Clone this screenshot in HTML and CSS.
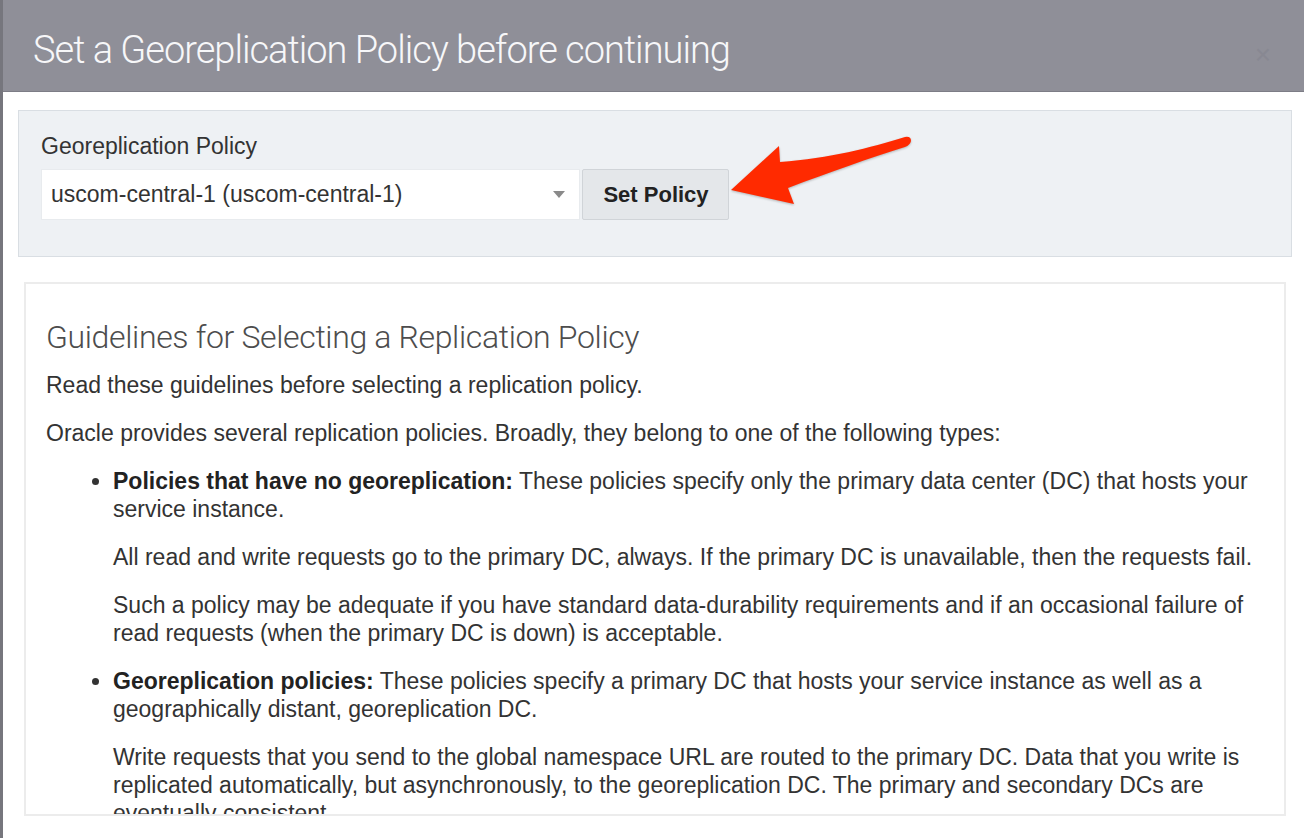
FILE: index.html
```html
<!DOCTYPE html>
<html lang="en">
<head>
<meta charset="utf-8">
<title>Set a Georeplication Policy</title>
<link rel="stylesheet" href="styles.css">
</head>
<body>
<div class="dialog">
  <header class="dialog-header">
    <h1 class="dialog-title">Set a Georeplication Policy before continuing</h1>
    <span class="dialog-close">&times;</span>
  </header>
  <div class="dialog-body">
    <section class="policy-panel">
      <label class="policy-label">Georeplication Policy</label>
      <div class="policy-row">
        <div class="policy-select">
          <span class="policy-value">uscom-central-1 (uscom-central-1)</span>
          <span class="policy-caret"></span>
        </div>
        <button class="policy-button">Set Policy</button>
      </div>
    </section>
    <section class="guide-panel">
      <h2 class="guide-title">Guidelines for Selecting a Replication Policy</h2>
      <p>Read these guidelines before selecting a replication policy.</p>
      <p>Oracle provides several replication policies. Broadly, they belong to one of the following types:</p>
      <ul class="guide-list">
        <li>
          <p><strong>Policies that have no georeplication:</strong> These policies specify only the primary data center (DC) that hosts your service instance.</p>
          <p>All read and write requests go to the primary DC, always. If the primary DC is unavailable, then the requests fail.</p>
          <p>Such a policy may be adequate if you have standard data-durability requirements and if an occasional failure of read requests (when the primary DC is down) is acceptable.</p>
        </li>
        <li>
          <p><strong>Georeplication policies:</strong> These policies specify a primary DC that hosts your service instance as well as a geographically distant, georeplication DC.</p>
          <p>Write requests that you send to the global namespace URL are routed to the primary DC. Data that you write is replicated automatically, but asynchronously, to the georeplication DC. The primary and secondary DCs are eventually consistent.</p>
        </li>
      </ul>
    </section>
  </div>
  <svg class="callout-arrow" width="200" height="90" viewBox="720 125 200 90" aria-hidden="true">
    <path d="M731 190 L779 146 L780 162 C830 158 870 148 905 137 Q911 136 911 141 Q910 145 905 147 C870 158 830 172 788 188 L794 204 Z" fill="#ff2a00"/>
  </svg>
</div>
</body>
</html>
```

FILE: styles.css
```css
html, body {
  margin: 0;
  padding: 0;
  background: #ffffff;
}

body {
  font-family: "Liberation Sans", Arial, sans-serif;
  color: #333333;
}

.dialog {
  position: relative;
  height: 838px;
  border-left: 3px solid #76767d;
  box-sizing: border-box;
  display: flex;
  flex-direction: column;
  overflow: hidden;
}

.dialog-header {
  height: 91px;
  flex: none;
  background: #8f8f98;
  border-bottom: 1px solid #7d7d86;
  display: flex;
  align-items: center;
  justify-content: space-between;
  padding: 0 33px 0 30px;
}

.dialog-title {
  margin: 9px 0 0 0;
  font-family: Roboto, "Liberation Sans", sans-serif;
  font-weight: 300;
  font-size: 38px;
  letter-spacing: -1px;
  color: #f7f7f9;
}

.dialog-close {
  font-size: 28px;
  color: #888892;
  margin-top: 18px;
}

.dialog-body {
  flex: 1;
  display: flex;
  flex-direction: column;
  padding: 18px 12px 22px 15px;
  gap: 25px;
  min-height: 0;
}

.policy-panel {
  flex: none;
  height: 147px;
  box-sizing: border-box;
  background: #eef1f4;
  border: 1px solid #d9dee3;
  padding: 22px 22px 0 22px;
}

.policy-label {
  display: block;
  font-size: 23px;
  line-height: 26px;
  color: #333333;
  margin-bottom: 10px;
}

.policy-row {
  display: flex;
  gap: 2px;
  height: 51px;
}

.policy-select {
  width: 539px;
  box-sizing: border-box;
  background: #ffffff;
  border: 1px solid #e8ebee;
  display: flex;
  align-items: center;
  justify-content: space-between;
  padding: 0 14px 0 9px;
}

.policy-value {
  font-size: 23px;
  color: #333333;
}

.policy-caret {
  width: 0;
  height: 0;
  border-left: 6px solid transparent;
  border-right: 6px solid transparent;
  border-top: 7px solid #8a8a8a;
}

.policy-button {
  width: 147px;
  box-sizing: border-box;
  background: #e4e7ea;
  border: 1px solid #d0d4d8;
  border-radius: 2px;
  font-family: "Liberation Sans", Arial, sans-serif;
  font-weight: 700;
  font-size: 22px;
  color: #222222;
  padding: 0 0 0 1px;
}

.guide-panel {
  flex: 1;
  min-height: 0;
  margin: 0 6px 0 6px;
  border: 2px solid #ececec;
  padding: 35px 20px 0 20px;
  overflow: hidden;
  font-size: 23px;
  line-height: 28px;
}

.guide-title {
  margin: 0 0 16px 0;
  font-family: Roboto, "Liberation Sans", sans-serif;
  font-weight: 300;
  font-size: 32px;
  line-height: 36px;
  letter-spacing: -0.35px;
  color: #4d4d4d;
}

.guide-panel p {
  margin: 0 0 20px 0;
}

.guide-list {
  margin: 0;
  padding-left: 67px;
}

.guide-list li {
  margin: 0;
}

.guide-list strong {
  font-weight: 700;
  color: #222222;
}

.callout-arrow {
  position: absolute;
  left: 717px;
  top: 125px;
  filter: drop-shadow(0 1px 1px rgba(0, 0, 0, 0.25));
}
```
